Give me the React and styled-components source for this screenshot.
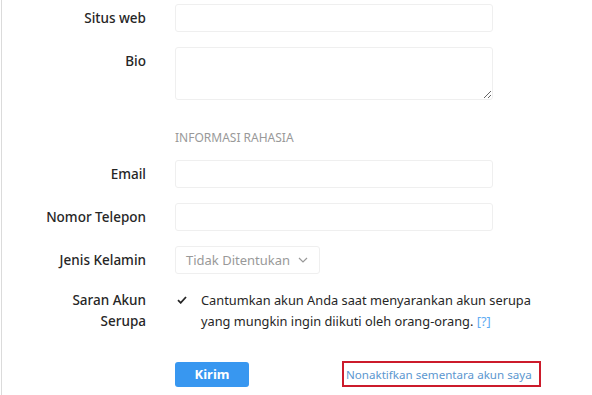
import React from "react";
import styled, { createGlobalStyle } from "styled-components";

const GlobalStyle = createGlobalStyle`
  body {
    margin: 0;
    background: #fff;
    font-family: "Noto Sans", "Open Sans", sans-serif;
    color: #262626;
  }
`;

const Page = styled.div`
  margin-left: 1px;
  border-left: 1px solid #dbdbdb;
  height: 395px;
  overflow: hidden;
  box-sizing: border-box;
  padding-top: 4px;
  display: flex;
  flex-direction: column;
`;

const Row = styled.div`
  display: grid;
  grid-template-columns: 144px 1fr;
  column-gap: 29px;
  align-items: ${(p) => (p.top ? "start" : "center")};
  margin-top: ${(p) => p.gap ?? 15}px;
`;

const Label = styled.label`
  text-align: right;
  font-size: 13.5px;
  font-weight: 500;
  line-height: ${(p) => (p.tall ? "20.5px" : "28px")};
  color: #262626;
`;

const Input = styled.input`
  box-sizing: border-box;
  width: 318px;
  height: 28px;
  border: 1px solid #efefef;
  border-radius: 3px;
  background: #fff;
  padding: 0 10px;
  font: inherit;
  outline: none;
`;

const TextArea = styled.textarea`
  box-sizing: border-box;
  width: 318px;
  height: 53px;
  border: 1px solid #efefef;
  border-radius: 3px;
  display: block;
  font: inherit;
  outline: none;
`;

const Heading = styled.div`
  grid-column: 2;
  font-size: 12px;
  color: #999;
  line-height: 20px;
`;

const Select = styled.div`
  box-sizing: border-box;
  width: 145px;
  height: 28px;
  border: 1px solid #efefef;
  border-radius: 3px;
  display: flex;
  align-items: center;
  padding: 0 10px;
  gap: 8px;
  font-size: 13px;
  color: #999;
`;

const CheckRow = styled.div`
  display: flex;
  gap: 11px;
  font-size: 12.8px;
  line-height: 20.5px;
  color: #262626;
`;

const CheckMark = styled.span`
  flex: none;
  width: 13px;
  padding-left: 2px;
  display: flex;
  align-items: center;
  height: 20px;
`;

const CheckText = styled.span`
  width: 350px;
`;

const Help = styled.a`
  color: #3897f0;
  opacity: 0.8;
  text-decoration: none;
`;

const Actions = styled.div`
  grid-column: 2;
  display: flex;
  align-items: center;
`;

const Submit = styled.button`
  width: 74px;
  height: 25px;
  border: none;
  border-radius: 3px;
  background: #3897f0;
  color: #fff;
  font-family: inherit;
  font-size: 13px;
  font-weight: 700;
`;

const DisableLink = styled.a`
  margin-left: 93px;
  border: 2px solid #cc1b2b;
  padding: 1px 7px 0 2px;
  height: 26px;
  box-sizing: border-box;
  display: flex;
  align-items: center;
  font-size: 11.6px;
  color: #5c97d0;
  text-decoration: none;
`;

function Chevron() {
  return (
    <svg width="10" height="6" viewBox="0 0 10 6">
      <path d="M1 1l4 4 4-4" fill="none" stroke="#999" strokeWidth="1.2" />
    </svg>
  );
}

function Check() {
  return (
    <svg width="10" height="8" viewBox="0 0 10 8">
      <path d="M1 4.2l2.7 2.6L9 1" fill="none" stroke="#262626" strokeWidth="1.8" />
    </svg>
  );
}

export default function App() {
  return (
    <>
      <GlobalStyle />
      <Page>
        <Row gap={0}>
          <Label>Situs web</Label>
          <Input type="text" />
        </Row>
        <Row top>
          <Label>Bio</Label>
          <TextArea />
        </Row>
        <Row gap={28}>
          <Heading>INFORMASI RAHASIA</Heading>
        </Row>
        <Row gap={12}>
          <Label>Email</Label>
          <Input type="email" />
        </Row>
        <Row>
          <Label>Nomor Telepon</Label>
          <Input type="tel" />
        </Row>
        <Row>
          <Label>Jenis Kelamin</Label>
          <Select>
            Tidak Ditentukan <Chevron />
          </Select>
        </Row>
        <Row top gap={16}>
          <Label tall>
            Saran Akun
            <br />
            Serupa
          </Label>
          <CheckRow>
            <CheckMark>
              <Check />
            </CheckMark>
            <CheckText>
              Cantumkan akun Anda saat menyarankan akun serupa yang mungkin
              ingin diikuti oleh orang-orang. <Help href="#">[?]</Help>
            </CheckText>
          </CheckRow>
        </Row>
        <Row gap={30}>
          <Actions>
            <Submit>Kirim</Submit>
            <DisableLink href="#">Nonaktifkan sementara akun saya</DisableLink>
          </Actions>
        </Row>
      </Page>
    </>
  );
}
